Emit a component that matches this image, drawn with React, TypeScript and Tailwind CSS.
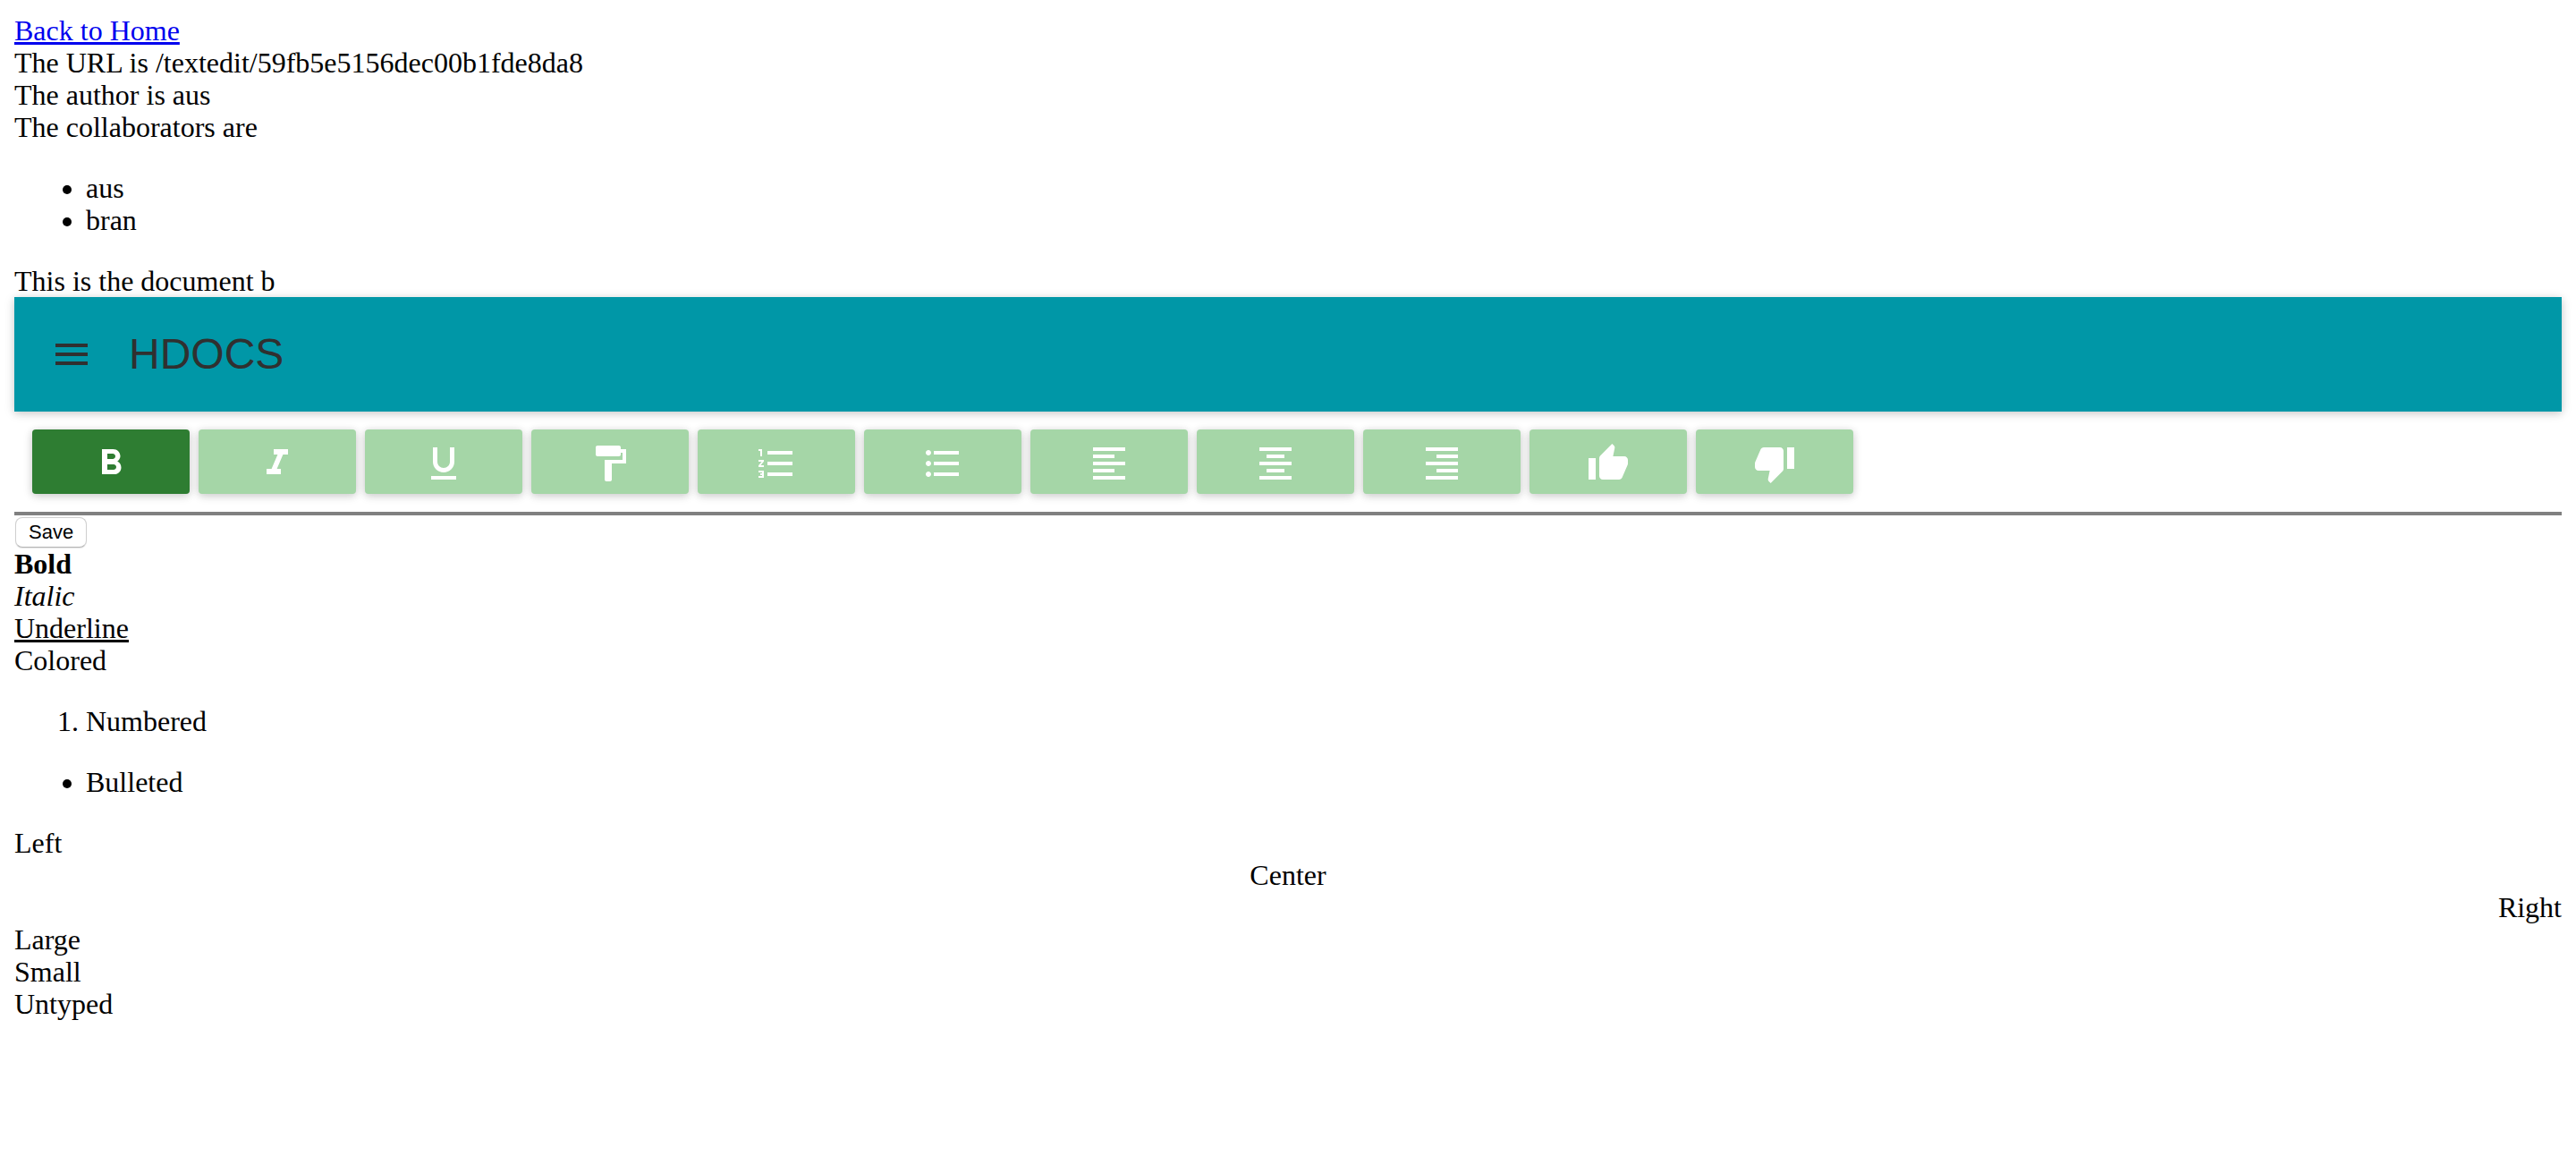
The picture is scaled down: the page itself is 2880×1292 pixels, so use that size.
import React from 'react';
import {
  MdFormatAlignCenter,
  MdFormatAlignLeft,
  MdFormatAlignRight,
  MdFormatBold,
  MdFormatItalic,
  MdFormatListBulleted,
  MdFormatListNumbered,
  MdFormatPaint,
  MdFormatUnderlined,
  MdMenu,
  MdThumbDown,
  MdThumbUp,
} from 'react-icons/md';
import type { IconType } from 'react-icons';

type Tool = { label: string; Icon: IconType; active?: boolean };

const tools: Tool[] = [
  { label: 'Bold', Icon: MdFormatBold, active: true },
  { label: 'Italic', Icon: MdFormatItalic },
  { label: 'Underline', Icon: MdFormatUnderlined },
  { label: 'Color', Icon: MdFormatPaint },
  { label: 'Numbered list', Icon: MdFormatListNumbered },
  { label: 'Bulleted list', Icon: MdFormatListBulleted },
  { label: 'Align left', Icon: MdFormatAlignLeft },
  { label: 'Align center', Icon: MdFormatAlignCenter },
  { label: 'Align right', Icon: MdFormatAlignRight },
  { label: 'Increase font size', Icon: MdThumbUp },
  { label: 'Decrease font size', Icon: MdThumbDown },
];

const collaborators = ['aus', 'bran'];

function AppBar() {
  return (
    <header className="flex h-32 items-center gap-4 bg-[#0097a7] px-4 text-[#303030] shadow-[0_2px_12px_rgba(0,0,0,0.12),0_2px_8px_rgba(0,0,0,0.12)]">
      <button type="button" aria-label="Menu" className="p-6">
        <MdMenu className="size-12" />
      </button>
      <h1 className="font-['Liberation_Sans',Arial,sans-serif] text-5xl leading-[128px]">HDOCS</h1>
    </header>
  );
}

function ToolButton({ label, Icon, active }: Tool) {
  const color = active ? 'bg-[#2e7d32]' : 'bg-[#a5d6a7]';
  return (
    <button
      type="button"
      aria-label={label}
      aria-pressed={!!active}
      className={`flex h-[72px] w-44 items-center justify-center rounded-sm pt-1 text-white shadow-[0_2px_12px_rgba(0,0,0,0.12),0_2px_8px_rgba(0,0,0,0.12)] ${color}`}
    >
      <Icon className="size-12" />
    </button>
  );
}

function Content() {
  return (
    <article>
      <p className="font-bold">Bold</p>
      <p className="italic">Italic</p>
      <p className="underline">Underline</p>
      <p>Colored</p>
      <ol className="my-8 list-decimal pl-20">
        <li>Numbered</li>
      </ol>
      <ul className="my-8 list-disc pl-20">
        <li>Bulleted</li>
      </ul>
      <p>Left</p>
      <p className="text-center">Center</p>
      <p className="text-right">Right</p>
      <p>Large</p>
      <p>Small</p>
      <p>Untyped</p>
    </article>
  );
}

export default function App() {
  return (
    <main className="bg-white p-4 font-['Liberation_Serif','Times_New_Roman',serif] text-[32px] leading-9 text-black">
      <p>
        <a href="#home" className="text-[#0000ee] underline">
          Back to Home
        </a>
      </p>
      <p>The URL is /textedit/59fb5e5156dec00b1fde8da8</p>
      <p>The author is aus</p>
      <p>The collaborators are</p>
      <ul className="my-8 list-disc pl-20">
        {collaborators.map((name) => (
          <li key={name}>{name}</li>
        ))}
      </ul>
      <p>This is the document b</p>
      <AppBar />
      <div
        role="toolbar"
        aria-label="Formatting"
        className="flex flex-wrap gap-[10px] border-b-4 border-[#808080] p-5"
      >
        {tools.map((tool) => (
          <ToolButton key={tool.label} {...tool} />
        ))}
      </div>
      <div className="flex h-9 items-end px-px">
        <button
          type="button"
          className="h-[34px] rounded-lg border border-[#cfcfcf] border-b-[#b4b4b4] bg-white px-[14px] font-['Liberation_Sans',Arial,sans-serif] text-[22px] leading-8 font-normal text-black shadow-[0_1px_1px_rgba(0,0,0,0.1)]"
        >
          Save
        </button>
      </div>
      <Content />
    </main>
  );
}
